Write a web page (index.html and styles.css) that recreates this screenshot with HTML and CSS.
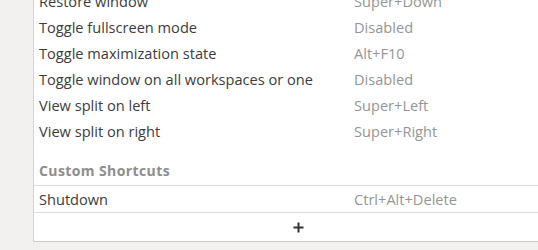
FILE: index.html
```html
<!DOCTYPE html>
<html lang="en">
<head>
  <meta charset="UTF-8">
  <title>Keyboard Shortcuts</title>
  <link rel="stylesheet" href="styles.css">
</head>
<body>
  <div class="panel">
    <div class="list">
      <div class="row"><span class="name">Restore window</span><span class="keys">Super+Down</span></div>
      <div class="row"><span class="name">Toggle fullscreen mode</span><span class="keys">Disabled</span></div>
      <div class="row"><span class="name">Toggle maximization state</span><span class="keys">Alt+F10</span></div>
      <div class="row"><span class="name">Toggle window on all workspaces or one</span><span class="keys">Disabled</span></div>
      <div class="row"><span class="name">View split on left</span><span class="keys">Super+Left</span></div>
      <div class="row"><span class="name">View split on right</span><span class="keys">Super+Right</span></div>
    </div>
    <div class="section">Custom Shortcuts</div>
    <div class="custom">
      <div class="row boxed"><span class="name">Shutdown</span><span class="keys">Ctrl+Alt+Delete</span></div>
      <div class="add">
        <svg width="11" height="11" viewBox="0 0 11 11"><path d="M5.5 0.5v10M0.5 5.5h10" stroke="#333" stroke-width="2"/></svg>
      </div>
    </div>
  </div>
</body>
</html>
```

FILE: styles.css
```css
html {
  overflow: hidden;
}

body {
  margin: 0;
  padding: 0 0 0 33px;
  background-color: #f2f1f0;
  font-family: "Open Sans", "DejaVu Sans", sans-serif;
  font-size: 14.6px;
  color: #3c3c3c;
}

.panel {
  width: 528px;
  background: white;
  border-left: 1px solid #d3d3d3;
  border-bottom: 1px solid #c8c8c8;
}

.list {
  margin-top: -12px;
}

.row {
  display: grid;
  grid-template-columns: 315px 1fr;
  align-items: center;
  height: 26px;
  padding-left: 5px;
}

.keys {
  color: #959595;
}

.section {
  height: 42px;
  box-sizing: border-box;
  padding: 17px 0 0 5px;
  font-size: 14px;
  font-weight: bold;
  letter-spacing: 0.4px;
  color: #8e8e8e;
  border-bottom: 1px solid #dcdcdc;
}

.boxed {
  border-bottom: 1px solid #dcdcdc;
}

.add {
  display: flex;
  justify-content: center;
  align-items: center;
  height: 28px;
}

.add svg {
  display: block;
}
```
